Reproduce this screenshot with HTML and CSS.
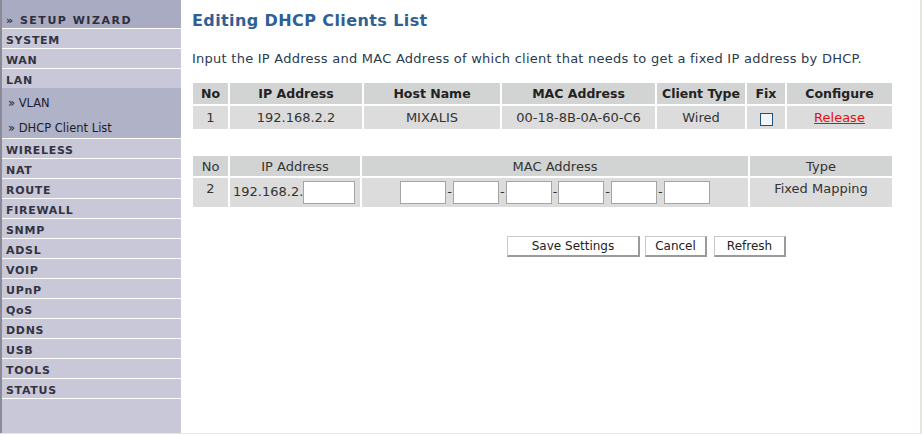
FILE: index.html
```html
<!DOCTYPE html>
<html lang="en">
<head>
	<meta charset="UTF-8">
	<title>Editing DHCP Clients List</title>
<link rel="stylesheet" href="styles.css">
</head>
<body>
	<div class="page">
		<ul class="menu">
			<li class="wizard"><a href="javascript:;">&raquo; SETUP WIZARD</a></li>
			<li><a href="javascript:;">SYSTEM</a></li>
			<li><a href="javascript:;">WAN</a></li>
			<li class="open"><a href="javascript:;">LAN</a>
				<ul class="sub">
					<li><a href="javascript:;">&raquo; VLAN</a></li>
					<li><a href="javascript:;">&raquo; DHCP Client List</a></li>
				</ul>
			</li>
			<li><a href="javascript:;">WIRELESS</a></li>
			<li><a href="javascript:;">NAT</a></li>
			<li><a href="javascript:;">ROUTE</a></li>
			<li><a href="javascript:;">FIREWALL</a></li>
			<li><a href="javascript:;">SNMP</a></li>
			<li><a href="javascript:;">ADSL</a></li>
			<li><a href="javascript:;">VOIP</a></li>
			<li><a href="javascript:;">UPnP</a></li>
			<li><a href="javascript:;">QoS</a></li>
			<li><a href="javascript:;">DDNS</a></li>
			<li><a href="javascript:;">USB</a></li>
			<li><a href="javascript:;">TOOLS</a></li>
			<li><a href="javascript:;">STATUS</a></li>
		</ul>
		<div class="main">
			<h1>Editing DHCP Clients List</h1>
			<p class="intro">Input the IP Address and MAC Address of which client that needs to get a fixed IP address by DHCP.</p>
			<table class="grid clients">
				<tr>
					<th class="c-no">No</th>
					<th class="c-ip">IP Address</th>
					<th class="c-host">Host Name</th>
					<th class="c-mac">MAC Address</th>
					<th class="c-type">Client Type</th>
					<th class="c-fix">Fix</th>
					<th>Configure</th>
				</tr>
				<tr>
					<td>1</td>
					<td>192.168.2.2</td>
					<td>MIXALIS</td>
					<td>00-18-8B-0A-60-C6</td>
					<td>Wired</td>
					<td><span class="check"></span></td>
					<td><a class="release" href="javascript:;">Release</a></td>
				</tr>
			</table>
			<table class="grid fixed">
				<tr>
					<td class="head c-no">No</td>
					<td class="head c-ip2">IP Address</td>
					<td class="head">MAC Address</td>
					<td class="head c-type2">Type</td>
				</tr>
				<tr>
					<td class="top">2</td>
					<td class="left">192.168.2.<input class="box ip" type="text"></td>
					<td><input class="box" type="text">-<input class="box" type="text">-<input class="box" type="text">-<input class="box" type="text">-<input class="box" type="text">-<input class="box" type="text"></td>
					<td class="top">Fixed Mapping</td>
				</tr>
			</table>
			<div class="buttons">
				<button class="save">Save Settings</button>
				<button class="cancel">Cancel</button>
				<button class="refresh">Refresh</button>
			</div>
		</div>
	</div>
</body>
</html>
```
FILE: styles.css
```css
body{
	margin: 0;
	background: #fff;
	font-family: "DejaVu Sans", Verdana, sans-serif;
}
.page{
	display: flex;
	height: 433px;
	width: 920px;
	border-bottom: 1px solid #e6e6de;
	border-right: 2px solid #e6e6de;
}
.menu{
	width: 179px;
	margin: 0;
	padding: 0;
	list-style: none;
	background: #c8c8d8;
	border-left: 2px solid #8a8a98;
}
.menu a{
	display: block;
	height: 17px;
	line-height: 19px;
	padding: 2px 0 0 4px;
	border-bottom: 1px solid #fff;
	color: #333340;
	font-size: 11px;
	font-weight: bold;
	letter-spacing: 0.7px;
	text-decoration: none;
}
.menu .wizard a{
	height: 26px;
	line-height: 38px;
	background: #a9abc2;
	letter-spacing: 1.5px;
	color: #2e2e3c;
}
.menu .open > a{
	border-bottom: none;
}
.sub{
	margin: 0;
	padding: 0;
	list-style: none;
	background: #b0b2c8;
	border-bottom: 1px solid #fff;
}
.sub a{
	height: 23px;
	line-height: 27px;
	padding-left: 6px;
	border-bottom: none;
	font-size: 11.5px;
	font-weight: normal;
	letter-spacing: 0;
	color: #1c1c2a;
}
.main{
	flex: 1;
	padding-left: 11px;
	color: #333;
}
h1{
	margin: 11px 0 0 0;
	font-size: 16px;
	letter-spacing: 0.4px;
	color: #2f5f93;
}
.intro{
	margin: 21px 0 0 0;
	font-size: 13px;
	letter-spacing: 0.25px;
	color: #2b3a4e;
}
.grid{
	width: 703px;
	border-spacing: 2px;
	margin-left: -1px;
	font-size: 13px;
	color: #333;
	text-align: center;
}
.grid td, .grid th{
	padding: 0;
	background: #dcdcdc;
}
.clients{
	margin-top: 15px;
}
.clients th{
	height: 21px;
	background: #d2d4d4;
	font-size: 12.5px;
	color: #222;
}
.clients td{
	height: 23px;
}
.c-no{ width: 35px; }
.c-ip{ width: 132px; }
.c-host{ width: 136px; }
.c-mac{ width: 153px; }
.c-type{ width: 88px; }
.c-fix{ width: 38px; }
.c-ip2{ width: 130px; }
.c-type2{ width: 142px; }
.check{
	display: inline-block;
	width: 11px;
	height: 11px;
	border: 1px solid #1c5180;
	background: #f4f4f8;
	vertical-align: middle;
	margin-top: 3px;
}
.release{
	color: #e01010;
}
.fixed{
	margin-top: 23px;
}
.fixed .head{
	height: 20px;
	background: #d2d4d4;
}
.fixed td{
	height: 26px;
}
.fixed .top{
	vertical-align: top;
	padding-top: 3px;
}
.fixed .left{
	text-align: left;
	padding-left: 3px;
}
.box{
	width: 42px;
	height: 21px;
	padding: 0 1px;
	margin: 0 1px;
	border: 1px solid #a4a4a4;
	background: #fff;
	vertical-align: middle;
	font-size: 12px;
}
.box.ip{
	width: 48px;
	margin: 0;
}
.buttons{
	display: flex;
	gap: 5px;
	margin: 27px 0 0 315px;
}
.buttons button{
	height: 21px;
	padding: 0;
	background: #fff;
	border: 1px solid #c8c8c8;
	border-right: 2px solid #9a9a9a;
	border-bottom: 2px solid #9a9a9a;
	font-family: "DejaVu Sans", Verdana, sans-serif;
	font-size: 12px;
	color: #222;
}
.save{ width: 133px; }
.cancel{ width: 62px; }
.refresh{ width: 72px; margin-left: 2px; }
```
